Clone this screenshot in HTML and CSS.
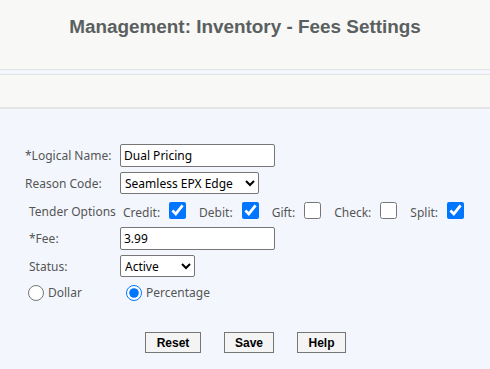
FILE: index.html
```html
<!DOCTYPE html>
<html>
<head>
<meta charset="utf-8">
<link rel="stylesheet" href="styles.css">
</head>
<body>
<header class="page-head">
  <h1 class="title">Management: Inventory - Fees Settings</h1>
</header>
<div class="sub-bar"></div>
<main class="content">
  <form class="fee-form">
    <div class="row">
      <label class="lbl">*Logical Name:</label>
      <input class="txt" type="text" value="Dual Pricing">
    </div>
    <div class="row">
      <label class="lbl">Reason Code:</label>
      <select class="sel sel-reason"><option>Seamless EPX Edge</option></select>
    </div>
    <div class="row row-tender">
      <label class="lbl lbl-in">Tender Options</label>
      <div class="tenders">
        <span class="opt">Credit: <input type="checkbox" checked></span>
        <span class="opt">Debit: <input type="checkbox" checked></span>
        <span class="opt">Gift: <input type="checkbox"></span>
        <span class="opt">Check: <input type="checkbox"></span>
        <span class="opt">Split: <input type="checkbox" checked></span>
      </div>
    </div>
    <div class="row">
      <label class="lbl lbl-in">*Fee:</label>
      <input class="txt" type="text" value="3.99">
    </div>
    <div class="row">
      <label class="lbl lbl-in">Status:</label>
      <select class="sel sel-status"><option>Active</option></select>
    </div>
    <div class="row row-radio">
      <label class="radio radio-dollar"><input type="radio" name="t"> Dollar</label>
      <label class="radio"><input type="radio" name="t" checked> Percentage</label>
    </div>
    <div class="buttons">
      <button type="button" class="btn btn-reset">Reset</button>
      <button type="button" class="btn btn-save">Save</button>
      <button type="button" class="btn btn-help">Help</button>
    </div>
  </form>
</main>
</body>
</html>
```
FILE: styles.css
```css
html, body {
  margin: 0;
  padding: 0;
}
body {
  background: #f3f7fd;
  font-family: "Noto Sans", "Open Sans", sans-serif;
  width: 490px;
  height: 369px;
  overflow: hidden;
}
.page-head {
  height: 69px;
  background: #f8f8f6;
  border-bottom: 1px solid #e3e3e3;
  display: flex;
  align-items: flex-start;
  justify-content: center;
}
.title {
  margin: 15px 0 0 0;
  font-family: "Liberation Sans", Arial, sans-serif;
  font-weight: bold;
  font-size: 18.9px;
  line-height: 24px;
  color: #5a605f;
}
.sub-bar {
  margin-top: 4px;
  height: 32px;
  background: #f8f8f6;
  border-top: 1px solid #e3e3e3;
  border-bottom: 2px solid #e4e4e4;
}
.content {
  padding: 35px 0 0 25px;
}
.row {
  display: flex;
  align-items: center;
  margin-bottom: 5px;
}
.lbl {
  width: 95px;
  font-size: 12px;
  color: #555;
}
.lbl-in {
  padding-left: 4px;
  width: 91px;
}
.txt {
  box-sizing: border-box;
  width: 155px;
  height: 23px;
  margin: 0;
  padding: 1px 3px;
  font-family: "Noto Sans", sans-serif;
  font-size: 12px;
  color: #000;
  border: 1px solid #767676;
  border-radius: 2px;
  background: #fff;
}
.sel {
  box-sizing: border-box;
  height: 22px;
  margin: 0;
  font-family: "Noto Sans", sans-serif;
  font-size: 12px;
  color: #000;
  border: 1px solid #767676;
  border-radius: 2px;
  background: #fff;
}
.sel-reason { width: 139px; }
.sel-status { width: 75px; }
.row-tender {
  margin-top: 7px;
  margin-bottom: 6px;
}
.tenders {
  display: flex;
  gap: 13px;
  padding-left: 3px;
}
.opt {
  display: flex;
  align-items: center;
  font-size: 12px;
  color: #555;
  padding-top: 3px;
}
.opt input {
  width: 17px;
  height: 17px;
  margin: -5px 0 0 9px;
  accent-color: #0075ff;
}
.row-radio {
  margin-top: 7px;
}
.radio {
  display: flex;
  align-items: center;
  font-size: 12px;
  color: #555;
}
.radio input {
  width: 16px;
  height: 16px;
  margin: 0 4px 0 3px;
  accent-color: #0075ff;
}
.radio-dollar {
  width: 98px;
}
.buttons {
  display: flex;
  gap: 23px;
  margin: 31px 0 0 120px;
}
.btn {
  box-sizing: border-box;
  height: 21px;
  padding: 0;
  font-family: "Liberation Sans", Arial, sans-serif;
  font-weight: bold;
  font-size: 12px;
  color: #000;
  background: #f4f4f4;
  border: 1px solid #767676;
  border-radius: 0;
}
.btn-reset { width: 56px; }
.btn-save { width: 50px; }
.btn-help { width: 49px; }
```
